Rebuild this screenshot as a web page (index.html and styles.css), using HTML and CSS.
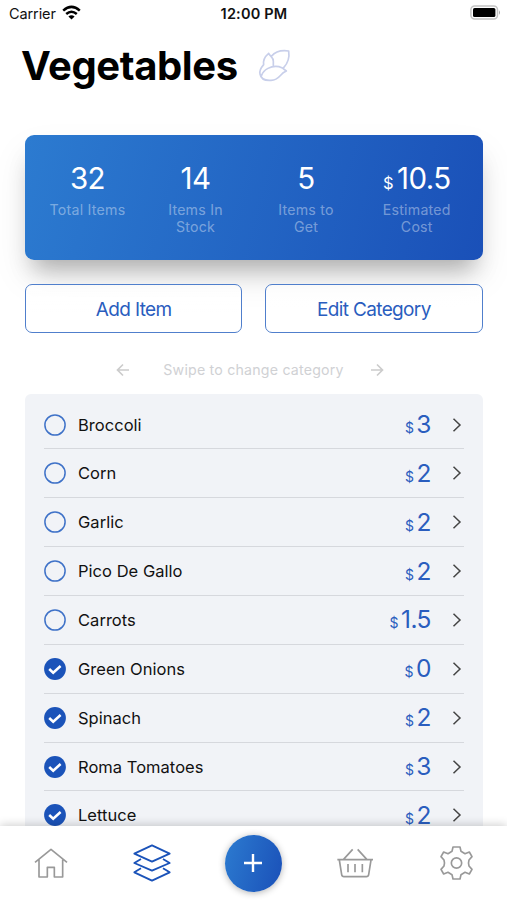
FILE: index.html
```html
<!DOCTYPE html>
<html lang="en">
<head>
<meta charset="utf-8">
<title>Vegetables</title>
<link rel="stylesheet" href="styles.css">
</head>
<body>
<svg class="defs" width="0" height="0">
  <symbol id="ring" viewBox="0 0 22 22"><circle cx="11" cy="11" r="10.1" fill="none" stroke="#3f72c8" stroke-width="1.5"/></symbol>
  <symbol id="check" viewBox="0 0 22 22"><circle cx="11" cy="11" r="10.9" fill="#1b53b9"/><path d="M5.2 11 9.2 14.7 16.6 8" fill="none" stroke="#fff" stroke-width="2.5"/></symbol>
  <symbol id="chevron" viewBox="0 0 10 16"><path d="M1.5 1.7 8 8 1.5 14.3" fill="none" stroke="#444" stroke-width="1.5"/></symbol>
</svg>
<div class="app">
  <header class="status">
    <div class="carrier"><span>Carrier</span>
      <svg width="19" height="15" viewBox="0 0 19 15" fill="none" stroke="#000" stroke-width="2.5"><path d="M1.2 5.6Q9.5-1.8 17.8 5.6M4.2 9Q9.5 4.4 14.8 9"/><path d="M9.5 14.6 6.4 11.4Q9.5 8.9 12.6 11.4Z" fill="#000" stroke="none"/></svg>
    </div>
    <div class="clock">12:00 PM</div>
    <svg class="battery" width="32" height="16" viewBox="0 0 32 16"><rect x=".9" y=".9" width="26.6" height="13.2" rx="3.8" fill="#fff" stroke="#c4c4c4" stroke-width="1.5"/><rect x="3" y="3" width="22.4" height="9" rx="1.6"/><path d="M29 5.2q2 2.3 0 4.6z" fill="#aaa"/></svg>
  </header>
  <div class="heading">
    <h1>Vegetables</h1>
    <svg class="corn" width="36" height="36" viewBox="774 137 108 108" fill="none" stroke="#c8cfea" stroke-width="5" stroke-linejoin="round" stroke-linecap="round"><path d="M814 168C826 154 847 149 866 152C869 171 863 189 851 202M806 159C792 171 789 182 791 193C784 201 777 208 780 221C783 238 799 241 813 240C841 239 837 220 859 212C851 205 846 201 837 199C813 194 790 209 785 225M806 159C811 169 821 172 820 183V197"/></svg>
  </div>
  <section class="summary">
    <div class="stat"><div class="value">32</div><div class="label">Total Items</div></div>
    <div class="stat"><div class="value">14</div><div class="label">Items In<br>Stock</div></div>
    <div class="stat"><div class="value">5</div><div class="label">Items to<br>Get</div></div>
    <div class="stat"><div class="value"><small>$</small>10.5</div><div class="label">Estimated<br>Cost</div></div>
  </section>
  <div class="actions"><button class="btn add">Add Item</button><button class="btn edit">Edit Category</button></div>
  <div class="swipe">
    <svg width="14" height="14" viewBox="0 0 14 14"><path d="M13 7H1.5M7 1.5 1.5 7 7 12.5"/></svg>
    <span>Swipe to change category</span>
    <svg width="14" height="14" viewBox="0 0 14 14"><path d="M1 7h11.5M7 1.5 12.5 7 7 12.5"/></svg>
  </div>
  <main class="list">
    <div class="row"><svg class="mark"><use href="#ring"/></svg><span class="name">Broccoli</span><span class="price"><small>$</small>3</span><svg class="chev"><use href="#chevron"/></svg></div>
    <div class="row"><svg class="mark"><use href="#ring"/></svg><span class="name">Corn</span><span class="price"><small>$</small>2</span><svg class="chev"><use href="#chevron"/></svg></div>
    <div class="row"><svg class="mark"><use href="#ring"/></svg><span class="name">Garlic</span><span class="price"><small>$</small>2</span><svg class="chev"><use href="#chevron"/></svg></div>
    <div class="row"><svg class="mark"><use href="#ring"/></svg><span class="name">Pico De Gallo</span><span class="price"><small>$</small>2</span><svg class="chev"><use href="#chevron"/></svg></div>
    <div class="row"><svg class="mark"><use href="#ring"/></svg><span class="name">Carrots</span><span class="price"><small>$</small>1.5</span><svg class="chev"><use href="#chevron"/></svg></div>
    <div class="row"><svg class="mark"><use href="#check"/></svg><span class="name">Green Onions</span><span class="price"><small>$</small>0</span><svg class="chev"><use href="#chevron"/></svg></div>
    <div class="row"><svg class="mark"><use href="#check"/></svg><span class="name">Spinach</span><span class="price"><small>$</small>2</span><svg class="chev"><use href="#chevron"/></svg></div>
    <div class="row"><svg class="mark"><use href="#check"/></svg><span class="name">Roma Tomatoes</span><span class="price"><small>$</small>3</span><svg class="chev"><use href="#chevron"/></svg></div>
    <div class="row"><svg class="mark"><use href="#check"/></svg><span class="name">Lettuce</span><span class="price"><small>$</small>2</span><svg class="chev"><use href="#chevron"/></svg></div>
  </main>
  <nav class="tabs">
    <svg class="tab" viewBox="93 130 120 120"><path d="M105 188 153 149 201 188M117 180V232H142V203H163V232H188V180"/></svg>
    <svg class="tab active" viewBox="398 130 120 120"><path d="M405 162 458 137 511 162 458 186ZM425 178 405 190 458 213 511 190 491 178M425 206 405 218 458 243 511 218 491 206"/></svg>
    <div class="plus"><svg width="20" height="20" viewBox="0 0 20 20"><path d="M10 1v18M1 10h18" stroke="#fff" stroke-width="2.4"/></svg></div>
    <svg class="tab" viewBox="255 130 120 120"><path d="M262 180H369M268 181 275 225Q276 231 282 231H349Q355 231 356 225L363 181M280 180 308 149M351 180 323 149M294 193V218M315 193V218M337 193V218"/></svg>
    <svg class="tab" viewBox="559 130 120 120"><path d="M610 142H631L634 155 646 162 659 157 667 171 658 181Q655 190 658 199L667 209 659 223 646 218 634 225 631 238H610L607 225 595 218 582 223 574 209 583 199Q586 190 583 181L574 171 582 157 595 162 607 155Z"/><circle cx="620.5" cy="190" r="15.5"/></svg>
  </nav>
</div>
</body>
</html>
```
FILE: styles.css
```css
* { box-sizing: border-box; }
body { margin: 0; background: #fff; font-family: Inter, "Liberation Sans", sans-serif; color: #111; }
svg { display: block; flex: none; }
.defs { position: absolute; }
.app { width: 507px; height: 900px; display: flex; flex-direction: column; overflow: hidden; }
.status { height: 28px; flex: none; display: grid; grid-template-columns: 1fr auto 1fr; align-items: center; padding: 0 6px 0 9px; font-size: 14.5px; line-height: 28px; }
.carrier { display: flex; align-items: center; gap: 6px; letter-spacing: -.1px; }
.carrier svg { margin-top: -3px; }
.clock { font-weight: 600; letter-spacing: .2px; margin-left: -2px; }
.battery { justify-self: end; margin: -2px -1px 0 0; }
.heading { height: 107px; flex: none; display: flex; padding: 14px 0 0 21px; }
h1 { margin: 0; width: 237px; font-size: 40px; line-height: 48px; font-weight: 700; letter-spacing: -.4px; color: #000; white-space: nowrap; }
.corn { margin-top: 4px; }
.summary { height: 125px; flex: none; margin: 0 24.5px 0 25px; padding: 24px 12px 0 8px; border-radius: 9px; background: linear-gradient(105deg, #2c7bd0, #1a50b8); box-shadow: 0 18px 22px -9px rgba(0,0,0,.28), 0 18px 36px rgba(0,0,0,.08); display: grid; grid-template-columns: 109px 107px 114px 1fr; text-align: center; color: #fff; }
.value { font-size: 29.5px; line-height: 38px; height: 42px; letter-spacing: -.6px; white-space: nowrap; }
.value small { font-size: 16.5px; margin-right: 4px; }
.label { font-size: 14.2px; line-height: 17px; letter-spacing: .22px; color: rgba(255,255,255,.4); white-space: nowrap; }
.actions { flex: none; display: flex; gap: 23px; margin: 24px 24.5px 0 25px; }
.btn { flex: 1; height: 49px; padding: 1px 0 0; border: 1.5px solid #507fcc; border-radius: 7px; background: linear-gradient(rgba(255,255,255,.6), #fff 60%); font: 400 19px Inter, sans-serif; letter-spacing: -.65px; color: #2a5dbe; white-space: nowrap; }
.swipe { height: 61px; flex: none; display: flex; align-items: center; padding: 12px 0 0 116px; color: #d0d1d4; font-size: 14.2px; letter-spacing: .2px; white-space: nowrap; }
.swipe span { width: 207px; text-align: center; margin: 0 13px 0 20px; }
.swipe svg { fill: none; stroke: #ccc; stroke-width: 1.7; }
.list { flex: 1; min-height: 0; overflow: hidden; margin: 0 24.5px 0 25px; padding: 6.6px 18.5px 0 19px; border-radius: 6px 6px 0 0; background: #f1f3f7; }
.row { height: 48.87px; display: flex; align-items: center; border-bottom: 1px solid #d6d8dd; }
.mark { width: 22px; height: 22px; margin-right: 12px; }
.name { flex: 1; font-size: 16.5px; line-height: 24px; letter-spacing: .03px; white-space: nowrap; }
.price { font-size: 24.5px; line-height: 30px; padding-top: 3px; letter-spacing: -.5px; color: #2a5dbe; white-space: nowrap; }
.price small { font-size: 14px; margin-right: 3px; }
.chev { width: 10px; height: 16px; margin: 0 2px 0 21px; }
.tabs { position: relative; height: 74px; flex: none; display: grid; grid-template-columns: repeat(5, 1fr); align-items: center; justify-items: center; background: #fff; box-shadow: 0 -1px 9px rgba(0,0,0,.2); }
.tab { width: 40px; height: 40px; fill: none; stroke: #999; stroke-width: 5; stroke-linejoin: round; }
.tab.active { stroke: #1b53b9; stroke-width: 5.5; }
.plus { width: 57px; height: 57px; border-radius: 50%; display: flex; align-items: center; justify-content: center; background: linear-gradient(105deg, #2c7bd0, #1a50b8); box-shadow: 0 1px 7px rgba(0,0,0,.3); }
```
